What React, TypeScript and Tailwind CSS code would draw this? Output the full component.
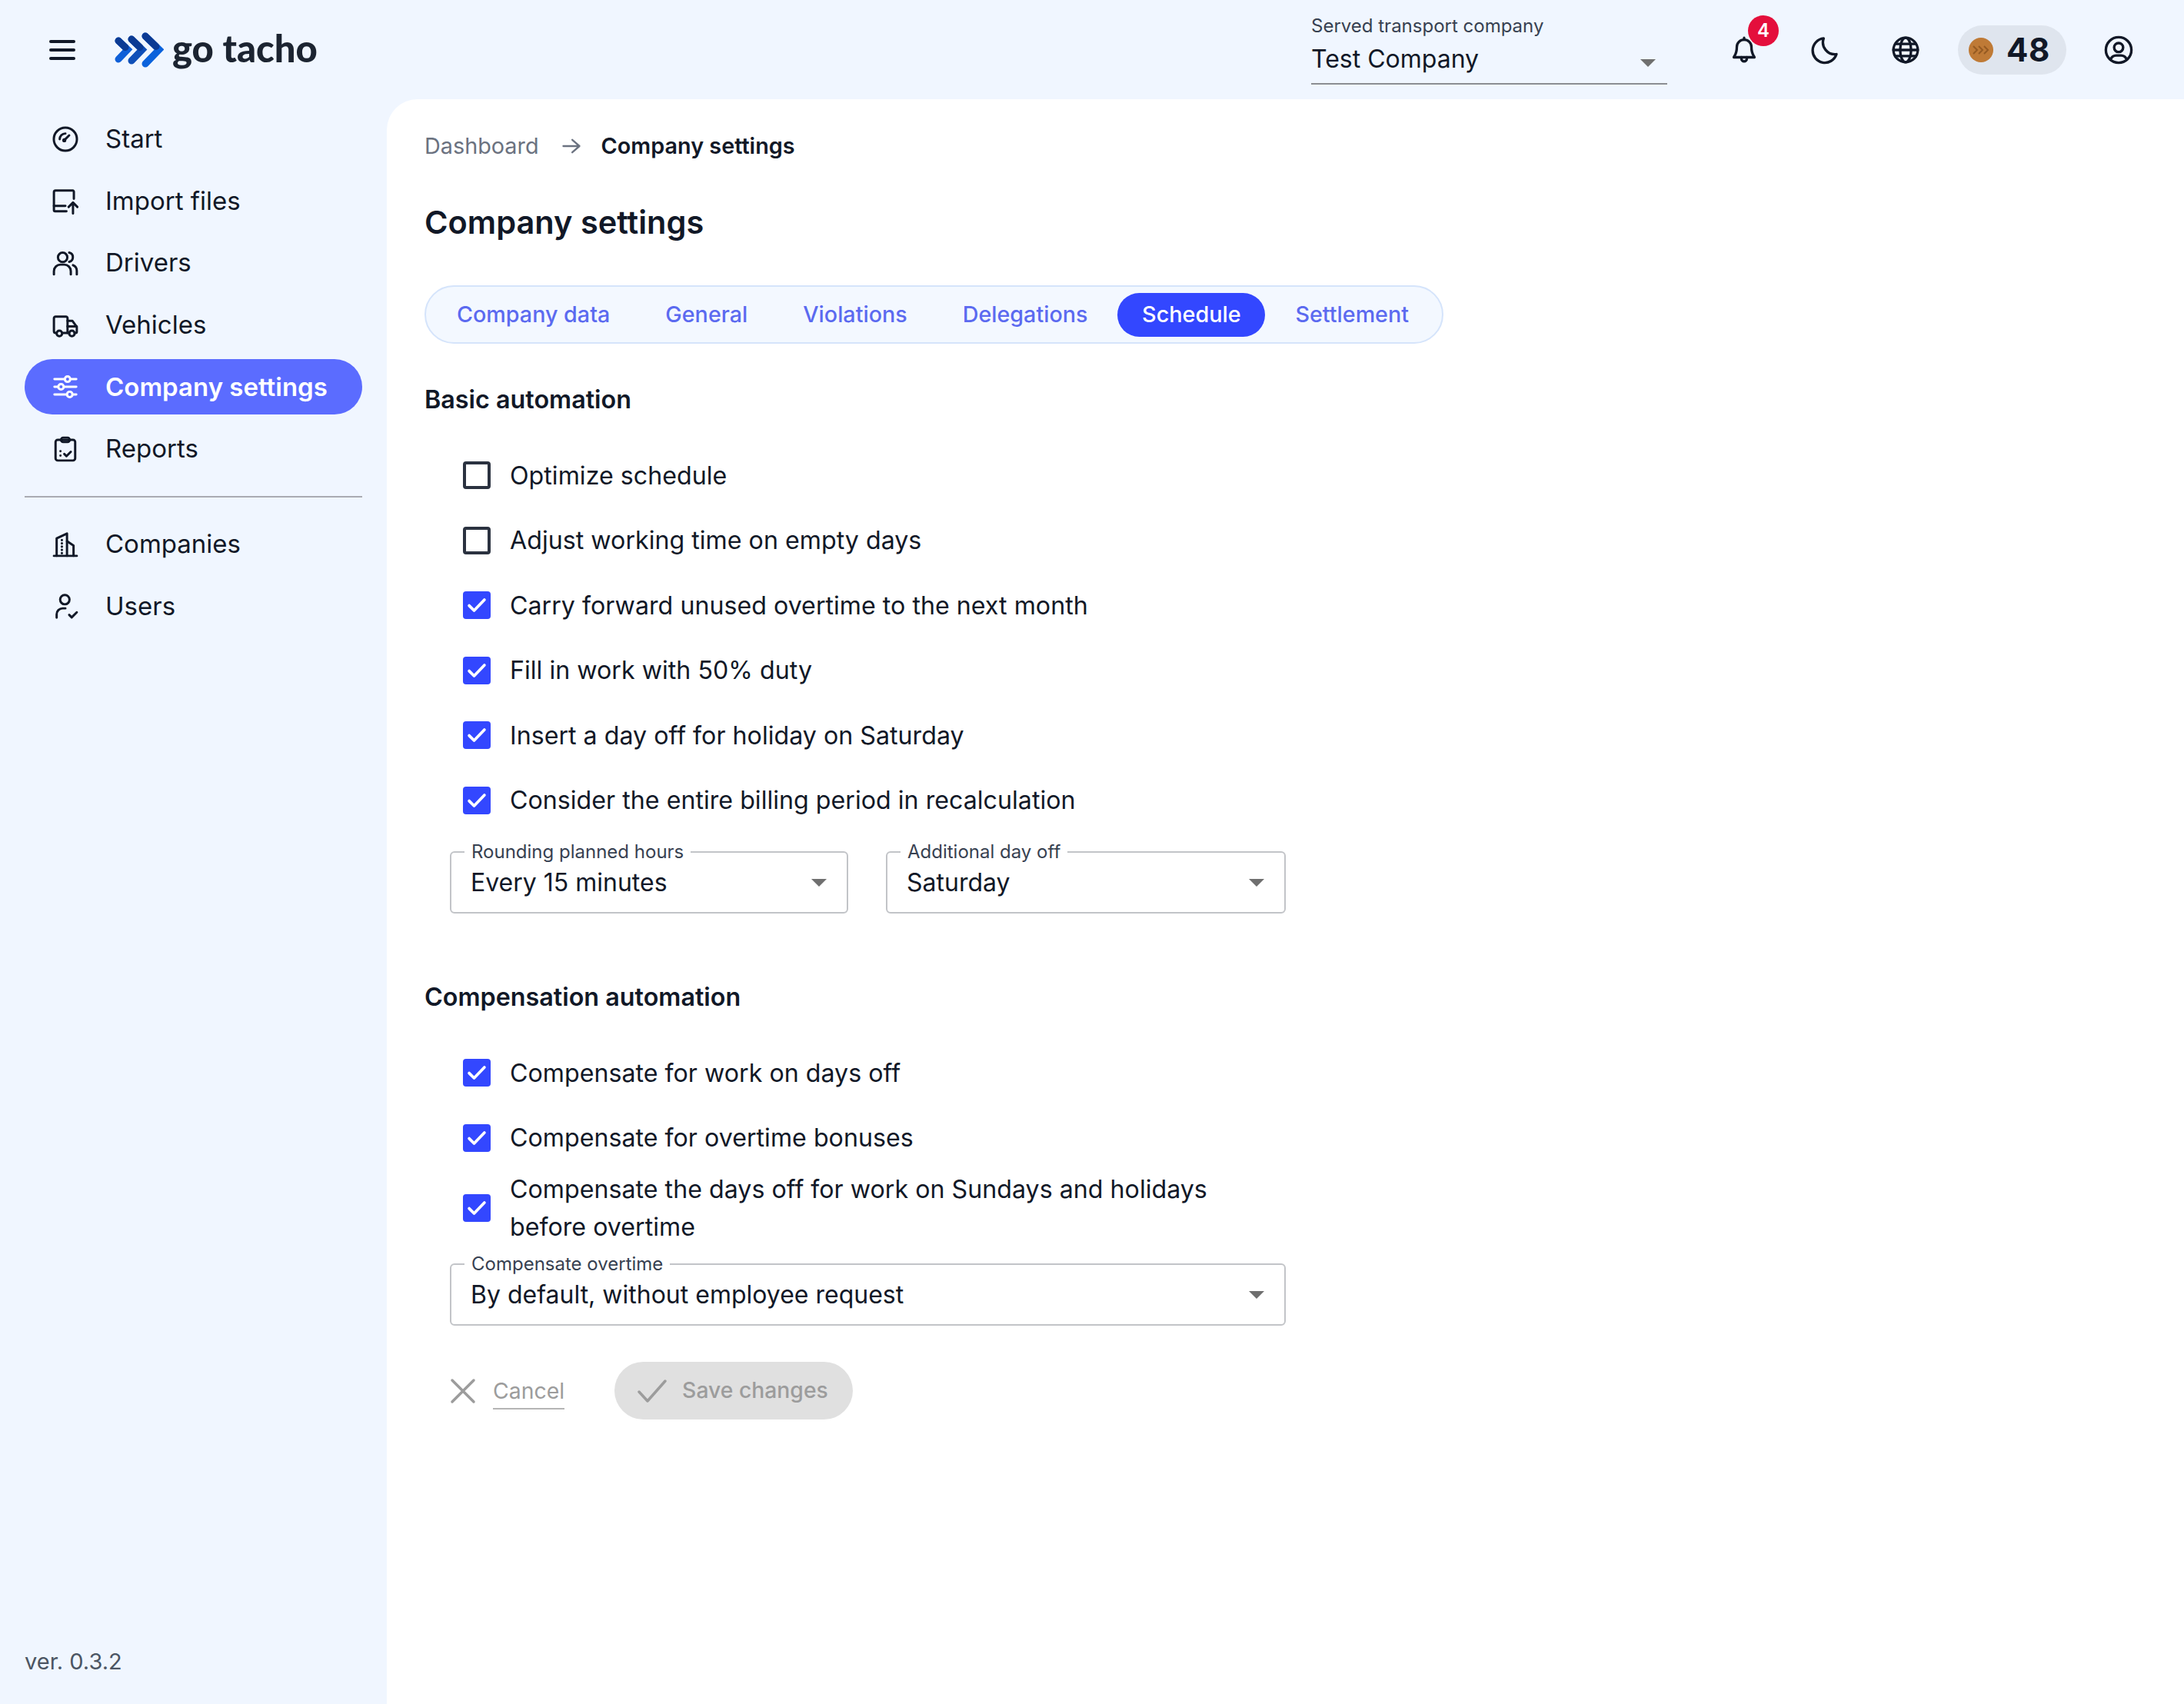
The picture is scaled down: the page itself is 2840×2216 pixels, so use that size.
import React from "react";

const Ico = ({ children, size = 34, sw = 2.1 }: { children: React.ReactNode; size?: number; sw?: number }) => (
  <svg width={size} height={size} viewBox="0 0 24 24" fill="none" stroke="currentColor" strokeWidth={sw} strokeLinecap="round" strokeLinejoin="round" className="shrink-0">
    {children}
  </svg>
);

const nav1 = [
  { label: "Start", icon: <><circle cx="12" cy="12" r="10.6" /><path d="M6.800 12a5.200 5.200 0 0 1 5.200-5.200" /><path d="M11 13l4.500-4.500" /><circle cx="11" cy="13" r="0.800" /></> },
  { label: "Import files", icon: <><path d="M19.800 9.500V3a1 1 0 0 0-1-1H3a1.500 1.500 0 0 0-1.500 1.500V20a1 1 0 0 0 1 1H13" /><path d="M1.500 16H12" /><path d="M19 23V13M15 17l4-4 4 4" /></> },
  { label: "Drivers", icon: <><circle cx="9.500" cy="6.800" r="4.300" /><path d="M15.500 2.500a4.300 4.300 0 0 1 0 8.400" /><path d="M1.500 22.500v-3a6 6 0 0 1 6-6h3.500a6 6 0 0 1 6 6v3" /><path d="M19 14a5.500 5.500 0 0 1 3.500 5v3.500" /></> },
  { label: "Vehicles", icon: <><path d="M3.500 19H3a1.500 1.500 0 0 1-1.500-1.500V5.500A1.500 1.500 0 0 1 3 4h9.500A1.500 1.500 0 0 1 14 5.500V19H9.500" /><path d="M14 8h4.500l4 5.500V18a1 1 0 0 1-1 1H20.500M14 19h1.500M14 13h8.500" /><circle cx="6.500" cy="19.500" r="2.500" /><circle cx="18" cy="19.500" r="2.500" /></> },
];
const nav2 = [
  { label: "Reports", icon: <><rect x="3" y="3.500" width="18" height="19" rx="2" /><rect x="8" y="1.500" width="8" height="4" rx="2" /><path d="M7.500 14v.01M7.500 18v.01" /><path d="M11 16.500l2 2 4-4" /></> },
];
const nav3 = [
  { label: "Companies", icon: <><path d="M1.500 22.500h21" /><path d="M4 22.500V6.500l9.500-4.500v20.500" /><path d="M13.500 9l6 4v9.500" /><path d="M8.800 8v.01M8.800 11v.01M8.800 14v.01M8.800 17v.01M8.800 20v.01" strokeWidth="2.200" /></> },
  { label: "Users", icon: <><circle cx="11.500" cy="5.500" r="4.300" /><path d="M4 22v-3a5.500 5.500 0 0 1 5.500-5.500H12" /><path d="M15.500 19.500l2.300 2.300 4.700-4.700" /></> },
];

const NavRow = ({ label, icon, active = false }: { label: string; icon: React.ReactNode; active?: boolean }) => (
  <div className={`flex h-[72px] items-center rounded-[36px] pl-[36px] gap-[35px] text-[33px] ${active ? "bg-[#5b6cff] text-white font-semibold" : "text-[#111827]"}`}>
    {icon}
    <span>{label}</span>
  </div>
);

const Check = ({ on, children, h = "h-[84.5px]" }: { on: boolean; children: React.ReactNode; h?: string }) => (
  <div className={`flex ${h} items-center pl-[50px] gap-[25px]`}>
    {on ? (
      <div className="flex h-[36px] w-[36px] shrink-0 items-center justify-center rounded-[4px] bg-[#3347ff] text-white">
        <svg width="28" height="28" viewBox="0 0 24 24" fill="none" stroke="currentColor" strokeWidth="3.200" strokeLinecap="round" strokeLinejoin="round"><path d="M3.500 12.500l5.500 5.500L20.500 6" /></svg>
      </div>
    ) : (
      <div className="h-[36px] w-[36px] shrink-0 rounded-[4px] border-[4px] border-[#2b3240]" />
    )}
    <div className="text-[32.200px] leading-[49px] text-[#111827]">{children}</div>
  </div>
);

const Caret = () => (
  <div className="h-0 w-0 border-x-[10px] border-t-[10px] border-x-transparent border-t-[#6f6f6f]" />
);

const Select = ({ label, value, w }: { label: string; value: string; w: string }) => (
  <div className={`relative flex h-[81px] ${w} items-center justify-between rounded-[6px] border-2 border-[#c2c4c8] pl-[25px] pr-[26px]`}>
    <span className="absolute left-[17px] top-[-14px] bg-white px-[9px] text-[24px] leading-[26px] text-[#374151]">{label}</span>
    <span className="text-[32px] text-[#111827]">{value}</span>
    <Caret />
  </div>
);

const tabs = ["Company data", "General", "Violations", "Delegations", "Schedule", "Settlement"];

export default function App() {
  return (
    <div className="flex h-[2216px] w-[2840px] flex-col overflow-hidden bg-[#f0f6ff] font-['Inter',sans-serif]">
      <header className="flex h-[129px] shrink-0 items-center">
        <div className="ml-[62px] text-[#111827]">
          <svg width="38" height="38" viewBox="0 0 38 38" fill="none" stroke="currentColor" strokeWidth="4" strokeLinecap="round"><path d="M4 8h30M4 19h30M4 30h30" /></svg>
        </div>
        <div className="ml-[49px] flex items-center">
          <svg width="64" height="46" viewBox="0 0 64 46" fill="none" strokeWidth="9" strokeLinejoin="miter">
            <path d="M5 11l12 11.500L5 35" stroke="#0f5fd8" strokeLinecap="round" />
            <path d="M5 11l9 8.500" stroke="#0b3a93" strokeLinecap="round" />
            <path d="M22 9l14 13.500L22 37" stroke="#0f4fb8" strokeLinecap="round" />
            <path d="M22 9l11 10.500" stroke="#0b3a93" strokeLinecap="round" />
            <path d="M40 5l18 17.500L40 41" stroke="#0b62dc" strokeLinecap="round" />
            <path d="M40 5l14 13.500" stroke="#0b3a93" strokeLinecap="round" />
          </svg>
          <span className="mb-[6px] ml-[11px] font-['Lato',sans-serif] text-[49px] font-black leading-[50px] text-[#1c2431]">go tacho</span>
        </div>
        <div className="ml-auto flex items-center">
          <div className="mb-[18px] flex h-[109px] w-[463px] flex-col border-b-2 border-[#8b8d92] pt-[18px]">
            <span className="text-[24px] leading-[30px] text-[#374151]">Served transport company</span>
            <div className="mt-[6px] flex items-center justify-between pr-[15px]">
              <span className="text-[32px] leading-[44px] text-[#111827]">Test Company</span>
              <div className="mt-[10px]"><Caret /></div>
            </div>
          </div>
          <div className="relative ml-[81px] text-[#111827]">
            <Ico size={38}><path d="M6 9.500a6 6 0 0 1 12 0c0 5.500 1.700 7 2.500 8.500h-17C4.300 16.500 6 15 6 9.500z" /><path d="M12 3.500V2M9.800 18v1.200a2.200 2.200 0 0 0 4.400 0V18" /></Ico>
            <div className="absolute left-[24px] top-[-26px] flex h-[40px] w-[40px] items-center justify-center rounded-full bg-[#e40f3c] text-[24px] font-semibold text-white">4</div>
          </div>
          <div className="ml-[67px] text-[#111827]"><Ico size={38}><path d="M11 2.500a9.800 9.800 0 0 0 10.500 13A10 10 0 1 1 11 2.500z" /></Ico></div>
          <div className="ml-[67px] text-[#111827]"><Ico size={38}><circle cx="12" cy="12" r="10" /><path d="M2 12h20M3.500 7h17M3.500 17h17" /><ellipse cx="12" cy="12" rx="4.500" ry="10" /></Ico></div>
          <div className="ml-[49px] flex h-[64px] w-[141px] items-center rounded-[32px] bg-[#dfe5ee] pl-[14px]">
            <div className="flex h-[32px] w-[32px] items-center justify-center rounded-full bg-[#bf7a36]">
              <svg width="24" height="14" viewBox="0 0 24 14" fill="none" stroke="#955a22" strokeWidth="2"><path d="M2 2l5 5-5 5M9 2l5 5-5 5M16 2l5 5-5 5" /></svg>
            </div>
            <span className="ml-[17px] text-[42px] font-bold leading-none tracking-[0.5px] text-[#111827]">48</span>
          </div>
          <div className="ml-[49px] mr-[66px] text-[#111827]"><Ico size={38}><circle cx="12" cy="12" r="10.500" /><circle cx="12" cy="10" r="3.700" /><path d="M5.500 19.500a5 5 0 0 1 4.500-3h4a5 5 0 0 1 4.500 3" /></Ico></div>
        </div>
      </header>

      <div className="flex min-h-0 flex-1">
        <aside className="flex w-[503px] shrink-0 flex-col px-[32px] pb-[37px] pt-[16px]">
          <div className="flex flex-col gap-[8.600px]">
            {nav1.map((n) => <NavRow key={n.label} label={n.label} icon={<Ico>{n.icon}</Ico>} />)}
            <NavRow active label="Company settings" icon={<Ico><path d="M2 5h20M2 12h20M2 19h20" /><circle cx="14" cy="5" r="2.500" fill="#5b6cff" /><circle cx="8" cy="12" r="2.500" fill="#5b6cff" /><circle cx="16" cy="19" r="2.500" fill="#5b6cff" /></Ico>} />
            {nav2.map((n) => <NavRow key={n.label} label={n.label} icon={<Ico>{n.icon}</Ico>} />)}
          </div>
          <div className="mb-[25px] mt-[25px] h-[2px] w-full bg-[#a9abb2]" />
          <div className="flex flex-col gap-[8.600px]">
            {nav3.map((n) => <NavRow key={n.label} label={n.label} icon={<Ico>{n.icon}</Ico>} />)}
          </div>
          <div className="mt-auto text-[29px] leading-[36px] text-[#4b5563]">ver. 0.3.2</div>
        </aside>

        <main className="min-w-0 flex-1 rounded-tl-[40px] bg-white pl-[49px] pt-[40px]">
          <div className="flex h-[42px] items-center text-[28.800px]">
            <span className="text-[#6b7280]">Dashboard</span>
            <svg className="ml-[28px]" width="28" height="28" viewBox="0 0 24 24" fill="none" stroke="#6b7280" strokeWidth="2" strokeLinecap="round" strokeLinejoin="round"><path d="M3 12h18M13 5l8 7-8 7" /></svg>
            <span className="ml-[25px] font-semibold text-[#111827]">Company settings</span>
          </div>
          <h1 className="mt-[51px] text-[41.500px] font-semibold leading-[54px] text-[#111827]">Company settings</h1>
          <div className="mt-[55px] flex h-[76px] w-[1325px] items-center rounded-[38px] border-2 border-[#d5e4fb] bg-[#f3f8ff] pl-[4px]">
            {tabs.map((t) => t === "Schedule" ? (
              <div key={t} className="mx-[3px] flex h-[57px] w-[192px] items-center justify-center whitespace-nowrap rounded-[29px] bg-[#3347ff] text-[28.800px] font-medium text-white">{t}</div>
            ) : (
              <div key={t} className="flex h-[57px] items-center whitespace-nowrap px-[36px] text-[28.700px] font-medium text-[#5b6af0]">{t}</div>
            ))}
          </div>

          <h2 className="mt-[51px] text-[32.300px] font-semibold leading-[44px] text-[#111827]">Basic automation</h2>
          <div className="mt-[34px] flex flex-col">
            <Check on={false}>Optimize schedule</Check>
            <Check on={false}>Adjust working time on empty days</Check>
            <Check on>Carry forward unused overtime to the next month</Check>
            <Check on>Fill in work with 50% duty</Check>
            <Check on>Insert a day off for holiday on Saturday</Check>
            <Check on>Consider the entire billing period in recalculation</Check>
          </div>
          <div className="ml-[33px] mt-[24px] flex gap-[49px]">
            <Select label="Rounding planned hours" value="Every 15 minutes" w="w-[518px]" />
            <Select label="Additional day off" value="Saturday" w="w-[520px]" />
          </div>

          <h2 className="mt-[87px] text-[32.300px] font-semibold leading-[44px] text-[#111827]">Compensation automation</h2>
          <div className="mt-[34px] flex flex-col">
            <Check on>Compensate for work on days off</Check>
            <Check on>Compensate for overtime bonuses</Check>
            <Check on h="h-[98px]">
              <span className="block w-[920px]">Compensate the days off for work on Sundays and holidays before overtime</span>
            </Check>
          </div>
          <div className="ml-[33px] mt-[23px]">
            <Select label="Compensate overtime" value="By default, without employee request" w="w-[1087px]" />
          </div>

          <div className="ml-[33px] mt-[47px] flex items-center">
            <div className="flex items-center text-[#9c9c9c]">
              <svg width="34" height="34" viewBox="0 0 34 34" fill="none" stroke="currentColor" strokeWidth="3.500" strokeLinecap="round"><path d="M3 3l28 28M31 3L3 31" /></svg>
              <span className="ml-[22px] border-b-2 border-[#b5b5b5] pb-[2px] pt-[4px] text-[28.400px] leading-[40px]">Cancel</span>
            </div>
            <div className="ml-[65px] flex h-[75px] w-[310px] items-center rounded-[38px] bg-[#e0e0e0] pl-[30px] text-[#9c9c9c]">
              <svg width="38" height="30" viewBox="0 0 38 30" fill="none" stroke="currentColor" strokeWidth="3.500" strokeLinecap="round" strokeLinejoin="round"><path d="M2 16l11 12L36 2" /></svg>
              <span className="ml-[20px] text-[28.300px] font-medium">Save changes</span>
            </div>
          </div>
        </main>
      </div>
    </div>
  );
}
